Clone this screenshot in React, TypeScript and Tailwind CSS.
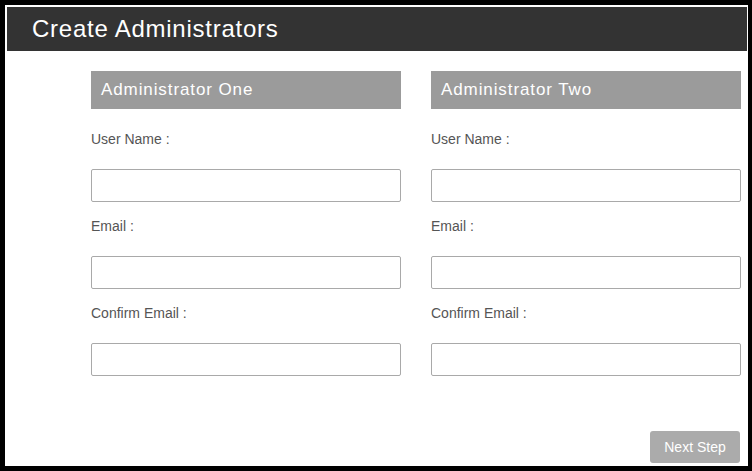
import React from "react";

const font = { fontFamily: '"Liberation Sans", Arial, sans-serif' };

function Column({ title }: { title: string }) {
  const fields = ["User Name :", "Email :", "Confirm Email :"];
  return (
    <div className="flex w-[310px] flex-col">
      <div className="flex h-[38px] items-center bg-[#9b9b9b] pl-[10px] text-[17px] tracking-[0.9px] text-white">
        {title}
      </div>
      {fields.map((f, i) => (
        <div key={f} className={i === 0 ? "mt-[21px]" : "mt-[15px]"}>
          <div className="h-[18px] text-[14px] leading-[18px] text-[#555]">{f}</div>
          <input
            type="text"
            className="mt-[21px] block h-[33px] w-[310px] rounded-[2px] border border-[#a9a9a9] bg-white outline-none"
          />
        </div>
      ))}
    </div>
  );
}

export default function App() {
  return (
    <div className="h-[471px] w-[752px] bg-black pb-[5px] pl-[5px] pr-[4px] pt-[5px]" style={font}>
      <div className="flex h-full flex-col bg-white pl-[2px] pr-[1px] pt-[2px]">
        <div className="flex h-[44px] shrink-0 items-center bg-[#333333] pl-[25px] text-[24px] tracking-[0.75px] text-white">
          Create Administrators
        </div>
        <div className="flex gap-[30px] pl-[84px] pt-[20px]">
          <Column title="Administrator One" />
          <Column title="Administrator Two" />
        </div>
        <div className="mt-auto flex justify-end pb-[3px] pr-[7px]">
          <button className="h-[32px] w-[90px] rounded-[3px] bg-[#ababab] text-[14px] text-white">
            Next Step
          </button>
        </div>
      </div>
    </div>
  );
}
